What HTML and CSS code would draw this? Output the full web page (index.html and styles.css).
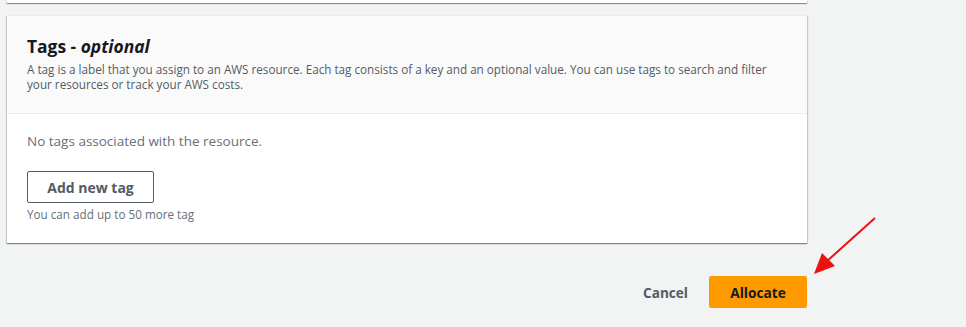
FILE: index.html
```html
<!DOCTYPE html>
<html>
<head>
<meta charset="utf-8">
<link rel="stylesheet" href="styles.css">
</head>
<body>
<div class="page">
  <div class="prev-card"></div>
  <div class="card">
    <div class="card-header">
      <h2 class="title">Tags - <i>optional</i></h2>
      <p class="desc">A tag is a label that you assign to an AWS resource. Each tag consists of a key and an optional value. You can use tags to search and filter your resources or track your AWS costs.</p>
    </div>
    <div class="card-body">
      <p class="empty">No tags associated with the resource.</p>
      <button class="btn-normal">Add new tag</button>
      <p class="hint">You can add up to 50 more tag</p>
    </div>
  </div>
  <div class="actions">
    <button class="btn-link">Cancel</button>
    <button class="btn-primary">Allocate</button>
  </div>
</div>
<svg class="arrow" width="966" height="327" viewBox="0 0 966 327">
  <line x1="875" y1="218" x2="826" y2="262" stroke="#ee1111" stroke-width="2"/>
  <polygon points="814,274 822,253 835,266" fill="#ee1111"/>
</svg>
</body>
</html>
```
FILE: styles.css
```css
html, body {
  margin: 0;
  padding: 0;
  background: #f2f3f3;
  font-family: "Open Sans", "Noto Sans", sans-serif;
  color: #16191f;
}
.page {
  width: 800px;
  padding-left: 7px;
}
.prev-card {
  height: 3px;
  background: #ffffff;
  box-shadow: 0 1px 1px 0 rgba(0,28,36,.3), 1px 1px 1px 0 rgba(0,28,36,.15), -1px 1px 1px 0 rgba(0,28,36,.15);
}
.card {
  margin-top: 12px;
  background: #ffffff;
  border-top: 1px solid #eaeded;
  box-shadow: 0 1px 1px 0 rgba(0,28,36,.3), 1px 1px 1px 0 rgba(0,28,36,.15), -1px 1px 1px 0 rgba(0,28,36,.15);
}
.card-header {
  background: #fafafa;
  border-bottom: 1px solid #eaeded;
  padding: 19px 20px 21px 20px;
}
.title {
  margin: 0;
  font-size: 17.4px;
  line-height: 22px;
  font-weight: 700;
  color: #16191f;
}
.title i {
  font-style: italic;
}
.desc {
  margin: 5px 0 0 0;
  font-size: 11.7px;
  line-height: 15px;
  color: #545b64;
}
.card-body {
  padding: 17px 20px 21px 20px;
}
.empty {
  margin: 0;
  font-size: 13.5px;
  line-height: 20px;
  color: #687078;
}
.btn-normal {
  margin-top: 20px;
  display: block;
  width: 127px;
  height: 32px;
  border: 1px solid #545b64;
  border-radius: 2px;
  background: #ffffff;
  color: #545b64;
  font-family: inherit;
  font-size: 14px;
  font-weight: 700;
  padding: 0;
}
.hint {
  margin: 3px 0 0 0;
  font-size: 11.7px;
  line-height: 16px;
  color: #687078;
}
.actions {
  display: flex;
  justify-content: flex-end;
  align-items: center;
  gap: 21px;
  margin-top: 33px;
}
.btn-link {
  border: none;
  background: none;
  padding: 0;
  font-family: inherit;
  font-size: 13.6px;
  font-weight: 700;
  color: #545b64;
}
.btn-primary {
  width: 98px;
  height: 32px;
  border: none;
  border-radius: 2px;
  background: #ff9900;
  color: #16191f;
  font-family: inherit;
  font-size: 13.7px;
  font-weight: 700;
  padding: 0;
}
.arrow {
  position: absolute;
  left: 0;
  top: 0;
  pointer-events: none;
}
```
